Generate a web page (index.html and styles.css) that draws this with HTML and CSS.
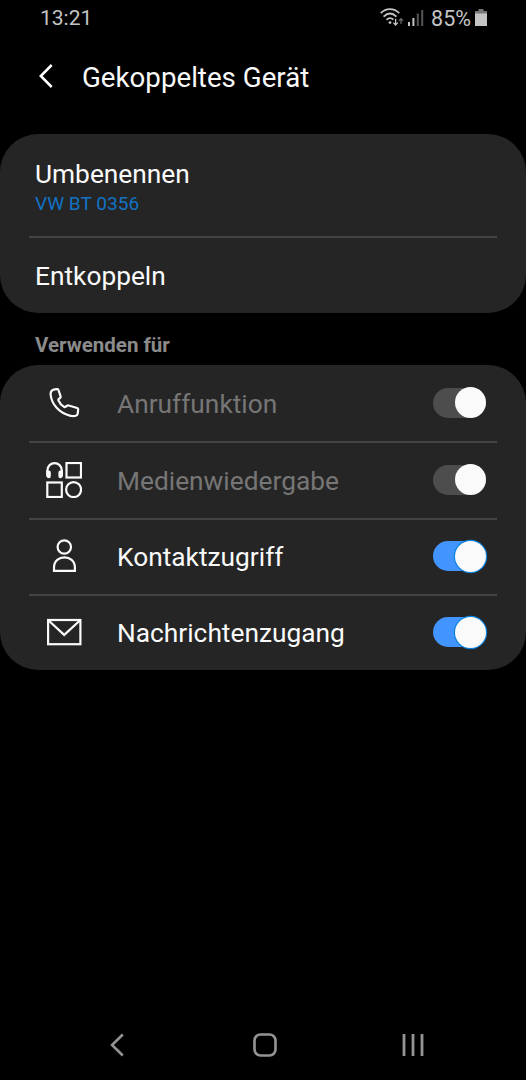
FILE: index.html
```html
<!doctype html>
<html lang="de">
<head>
    <meta charset="UTF-8">
    <meta name="viewport" content="width=device-width, initial-scale=1.0">
    <title>Gekoppeltes Gerät</title>
    <link rel="stylesheet" href="styles.css">
</head>
<body>
    <!-- Status bar -->
    <div class="status-bar">
        <span class="clock">13:21</span>
        <div class="status-icons">
            <svg class="wifi" width="24" height="20" viewBox="0 0 24 20" fill="none" stroke="#c4c4c4" stroke-width="1.8">
                <path d="M0.8 5.2 C6 -0.2 14 -0.2 19.2 5.2"/>
                <path d="M3.6 8.6 C7.6 4.8 12.4 4.8 16.4 8.6"/>
                <path d="M6.5 11.8 C8.8 9.6 11.2 9.6 13.4 11.6"/>
                <circle cx="10" cy="14.6" r="1.4" fill="#c4c4c4" stroke="none"/>
                <path d="M15.6 10.8v6M13.4 14.6l2.2 2.4 2.2-2.4" stroke-width="1.3"/>
                <path d="M21 16v-5.4M19 12.8l2-2.2 2 2.2" stroke="#666" stroke-width="1.3"/>
            </svg>
            <svg class="signal" width="16" height="18" viewBox="0 0 16 18">
                <path fill="#c4c4c4" d="M0 13h2v4H0zM4.4 9h2v8h-2z"/>
                <path fill="#555" d="M8.8 4.6h2V17h-2zM13.2 1h2v16h-2z"/>
            </svg>
            <span class="percent">85%</span>
            <svg class="battery" width="12" height="18" viewBox="0 0 12 18">
                <path fill="#777" d="M3.5 0h5v2H12v3H0V2h3.5z"/>
                <path fill="#c4c4c4" d="M0 4.5h12V17H0z"/>
            </svg>
        </div>
    </div>

    <!-- Title -->
    <header>
        <svg width="14" height="24" viewBox="0 0 14 24" fill="none" stroke="#fff" stroke-width="2.5">
            <path d="M12.7 1 L1.8 12 L12.7 23"/>
        </svg>
        <h1>Gekoppeltes Gerät</h1>
    </header>

    <main>
        <div class="card">
            <div class="item rename">
                <p class="label">Umbenennen</p>
                <p class="device">VW BT 0356</p>
            </div>
            <div class="item unpair">
                <p class="label">Entkoppeln</p>
            </div>
        </div>

        <h2>Verwenden für</h2>

        <div class="card">
            <div class="item option disabled">
                <svg class="icon" viewBox="0 0 36 36">
                    <path d="M8.6 4.4 L11.2 4.1 Q12.2 4 12.5 5 L14.6 11.4 Q14.9 12.4 14.1 13 L12.5 14.2 Q12.2 14.7 12.5 15.5 C13.8 18.6 15.8 20.7 18.3 22 Q19 22.3 19.6 21.7 L21 20.8 Q21.8 20.2 22.7 20.5 L31.2 23 Q32.3 23.4 32.2 24.5 L31.7 28.6 Q31.4 30.3 29.8 30.8 Q27.5 31.6 24.6 30.8 C13 28.3 5.6 19.2 4.6 9.5 Q4.4 5 8.6 4.4 Z"/>
                </svg>
                <p class="label">Anruffunktion</p>
                <span class="toggle"></span>
            </div>
            <div class="item option disabled">
                <svg class="icon" viewBox="0 0 36 36">
                    <path d="M1.3 14 V9 C1.3 -1.4 15.9 -1.4 15.9 9 V14"/>
                    <path class="filled" d="M0.4 8.5 H3 Q4.8 8.5 4.8 10.5 V14 Q4.8 16.2 3 16.2 Q0.4 16.2 0.4 13.5 Z M16.8 8.5 H14.2 Q12.4 8.5 12.4 10.5 V14 Q12.4 16.2 14.2 16.2 Q16.8 16.2 16.8 13.5 Z"/>
                    <rect x="20.5" y="1" width="14.5" height="14.5"/>
                    <rect x="1.3" y="20.5" width="14.5" height="14.5"/>
                    <circle cx="27.6" cy="27.6" r="7.5"/>
                </svg>
                <p class="label">Medienwiedergabe</p>
                <span class="toggle"></span>
            </div>
            <div class="item option">
                <svg class="icon" viewBox="0 0 36 36">
                    <circle cx="18.3" cy="9" r="6.7"/>
                    <path d="M8 32.8 V29.5 C8 15.9 28.9 15.9 28.9 29.5 V32.8 Z"/>
                </svg>
                <p class="label">Kontaktzugriff</p>
                <span class="toggle on"></span>
            </div>
            <div class="item option">
                <svg class="icon" viewBox="0 0 36 36">
                    <rect x="2.1" y="6" width="32.3" height="24.2"/>
                    <path d="M2.6 6.5 L18.2 20.9 L33.9 6.5"/>
                </svg>
                <p class="label">Nachrichtenzugang</p>
                <span class="toggle on"></span>
            </div>
        </div>
    </main>

    <!-- Navigation bar -->
    <nav>
        <svg width="14" height="24" viewBox="0 0 14 24" fill="none" stroke="#949494" stroke-width="2.5">
            <path d="M12.8 1.5 L2 12 L12.8 22.5"/>
        </svg>
        <svg class="home" width="24" height="24" viewBox="0 0 24 24" fill="none" stroke="#949494" stroke-width="2.6">
            <rect x="1.5" y="1.5" width="21" height="21" rx="6"/>
        </svg>
        <svg width="22" height="24" viewBox="0 0 22 24" fill="none" stroke="#949494" stroke-width="2.8">
            <path d="M2 1v22M11 1v22M20 1v22"/>
        </svg>
    </nav>
</body>
</html>
```

FILE: styles.css
```css
* {
    margin: 0;
    padding: 0;
    box-sizing: border-box;
}

body {
    font-family: Roboto, sans-serif;
    background-color: #000;
    color: #fafafa;
    display: flex;
    flex-direction: column;
    height: 1080px;
    overflow: hidden;
}

svg {
    display: block;
    flex: none;
}

/* Status bar */
.status-bar {
    display: flex;
    justify-content: space-between;
    align-items: center;
    height: 36px;
    padding: 0 39px 0 40px;
    color: #c4c4c4;
    font-size: 21px;
}

.status-icons {
    display: flex;
    align-items: center;
}

.signal {
    margin: 0 7px 0 4px;
}

.percent {
    font-size: 21.5px;
}

.battery {
    margin-left: 4px;
}

/* Title */
header {
    display: flex;
    align-items: center;
    gap: 29px;
    height: 80px;
    padding-left: 39px;
    margin-bottom: 18px;
}

h1 {
    padding-top: 2px;
    font-size: 27.7px;
    font-weight: 400;
}

main {
    flex: 1;
}

h2 {
    height: 52px;
    padding: 1px 35px 0;
    line-height: 62px;
    color: #8b8b8b;
    font-size: 20.5px;
    font-weight: 700;
}

/* Cards */
.card {
    background-color: #252525;
    border-radius: 38px;
    padding: 0 29px;
}

.item {
    padding: 0 6px;
}

.item + .item {
    border-top: 2px solid #444;
}

.label {
    font-size: 26.3px;
    line-height: 32px;
}

.rename {
    height: 102px;
    padding-top: 24px;
}

.device {
    color: #1272c4;
    font-size: 19.1px;
    line-height: 28px;
}

.unpair {
    height: 77px;
    padding-top: 22px;
}

.option {
    display: flex;
    align-items: center;
    height: 76.25px;
    padding: 0 11px 1px 17px;
}

.option .label {
    flex: 1;
    margin-left: 35px;
    padding-top: 2px;
}

.disabled .label {
    color: #767676;
}

.icon {
    width: 36px;
    height: 36px;
    fill: none;
    stroke: #fafafa;
    stroke-width: 2.2;
}

.icon .filled {
    fill: #fafafa;
    stroke: none;
}

/* Switches */
.toggle {
    display: flex;
    justify-content: flex-end;
    align-items: center;
    width: 53px;
    height: 30px;
    border-radius: 15px;
    background-color: #4d4d4d;
}

.toggle::after {
    content: "";
    flex: none;
    width: 31px;
    height: 31px;
    border-radius: 50%;
    background-color: #fafafa;
}

.toggle.on {
    background-color: #4294ff;
}

.toggle.on::after {
    box-shadow: 0 0 0 1.2px #0b82dc;
}

/* Navigation bar */
nav {
    display: flex;
    justify-content: space-between;
    align-items: center;
    height: 70px;
    padding: 0 102px 0 110px;
}

.home {
    margin-left: 4px;
}
```
